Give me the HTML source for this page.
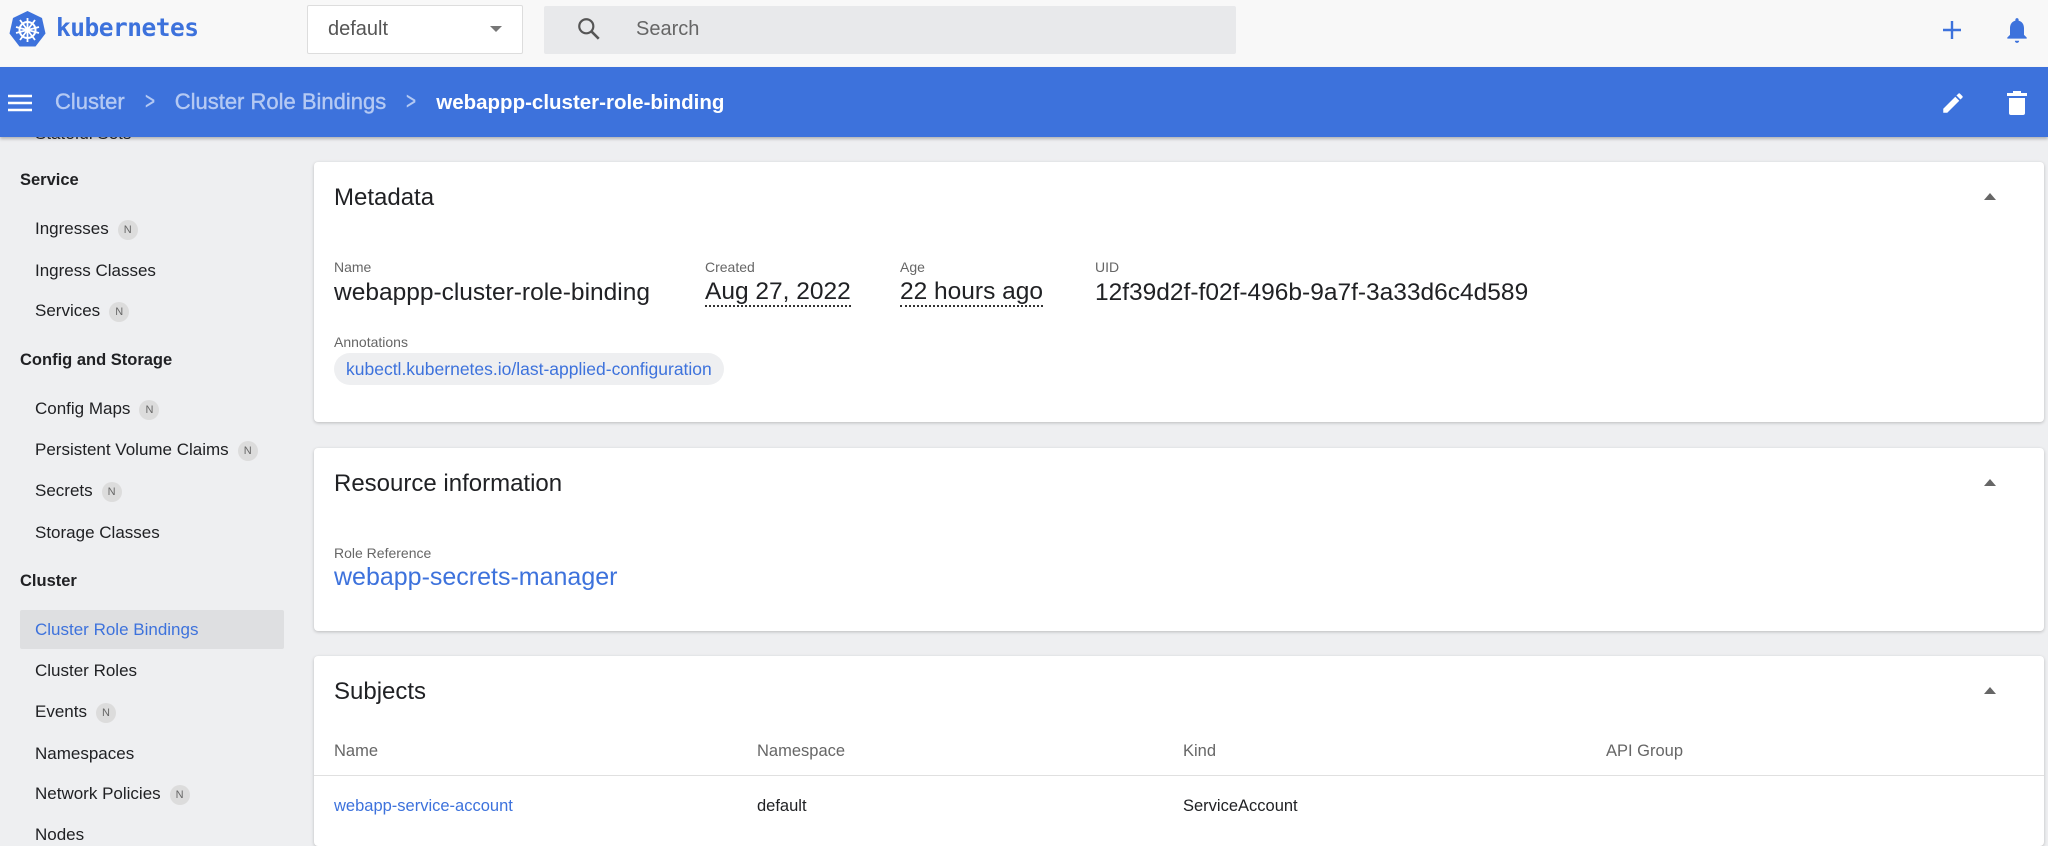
<!DOCTYPE html>
<html><head><meta charset="utf-8"><style>
*{box-sizing:border-box;margin:0;padding:0}
body{width:2048px;height:833px;overflow:hidden;background:#eeeff1;font-family:"Liberation Sans",sans-serif;position:relative;color:#202124}
.abs{position:absolute}
.top{left:0;top:0;width:2048px;height:67px;background:#f8f8f8}
.blue{left:0;top:67px;width:2048px;height:70px;background:#3d72dc;box-shadow:0 2px 3px rgba(0,0,0,.25)}
.side{font-size:17px;color:#202124}
.sh{font-weight:bold;left:20px;font-size:16.5px}
.si{left:35px}
.n{display:inline-block;width:20px;height:20px;border-radius:10px;background:#dcdcdc;color:#666;font-size:11px;text-align:center;line-height:20px;margin-left:9px;vertical-align:1px}
.card{left:314px;width:1730px;background:#fff;border-radius:4px;box-shadow:0 1px 3px rgba(0,0,0,.22)}
.ct{position:absolute;left:20px;font-size:24px;color:#202124}
.lab{position:absolute;font-size:14px;color:#666}
.val{position:absolute;font-size:24.5px;color:#202124}
.dot{border-bottom:2px dotted #333;line-height:1.05}
.tri{position:absolute;left:1670px;width:0;height:0;border-left:6px solid transparent;border-right:6px solid transparent;border-bottom:7px solid #666}
.sep{display:inline-block;margin:0 18px;font-size:24px;transform:scaleX(.7);vertical-align:0px}
</style></head><body>
<div class="abs top"></div>
<svg class="abs" style="left:9px;top:11px" width="37" height="37" viewBox="0 0 37 37"><polygon points="18.5,0 33,7 36.5,22.5 26.5,35.5 10.5,35.5 0.5,22.5 4,7" fill="#3d72dc"/><circle cx="18.5" cy="19" r="8" fill="none" stroke="#fff" stroke-width="2"/><g stroke="#fff" stroke-width="1.8"><line x1="18.5" y1="7" x2="18.5" y2="31"/><line x1="7" y1="16" x2="30" y2="22"/><line x1="30" y1="16" x2="7" y2="22"/><line x1="11" y1="9" x2="26" y2="29"/><line x1="26" y1="9" x2="11" y2="29"/></g><circle cx="18.5" cy="19" r="2.5" fill="#fff"/></svg>
<div class="abs" style="left:56px;top:13px;font-family:'DejaVu Sans Mono','Liberation Mono',monospace;font-size:24.5px;font-weight:bold;color:#3d72dc;letter-spacing:-0.5px">kubernetes</div>
<div class="abs" style="left:307px;top:5px;width:216px;height:49px;border:1px solid #ddd;background:#fff;border-radius:2px"></div>
<div class="abs" style="left:328px;top:18px;font-size:20px;color:#555">default</div>
<div class="abs" style="left:490px;top:26px;border-left:6px solid transparent;border-right:6px solid transparent;border-top:6px solid #777"></div>
<div class="abs" style="left:544px;top:6px;width:692px;height:48px;background:#e8e9eb;border-radius:2px"></div>
<svg class="abs" style="left:576px;top:16px" width="26" height="26" viewBox="0 0 24 24"><circle cx="9.5" cy="9.5" r="6.5" fill="none" stroke="#555" stroke-width="2"/><line x1="14.5" y1="14.5" x2="21" y2="21" stroke="#555" stroke-width="2.4"/></svg>
<div class="abs" style="left:636px;top:18px;font-size:20px;color:#666">Search</div>
<svg class="abs" style="left:1941px;top:19px" width="22" height="22" viewBox="0 0 22 22"><path d="M11 2v18M2 11h18" stroke="#3d72dc" stroke-width="2.4"/></svg>
<svg class="abs" style="left:2004px;top:16px" width="26" height="28" viewBox="0 0 24 26"><path d="M12 2c1 0 1.5.7 1.5 1.5v.8C17 5.2 18.5 8 18.5 11.5v6l2.5 2.5v1H3v-1l2.5-2.5v-6C5.5 8 7 5.2 10.5 4.3v-.8C10.5 2.7 11 2 12 2zM10 23h4a2 2 0 0 1-4 0z" fill="#3d72dc"/></svg>

<div class="abs blue"></div>
<svg class="abs" style="left:8px;top:93px" width="24" height="20" viewBox="0 0 24 20"><path d="M0 3h24M0 10h24M0 17h24" stroke="#fff" stroke-width="2.6"/></svg>
<div class="abs" style="left:55px;top:88px;font-size:22px;color:#b4c9f3;white-space:nowrap;-webkit-text-stroke:0.4px #b4c9f3">Cluster<span class="sep">&gt;</span>Cluster Role Bindings<span class="sep">&gt;</span><span style="color:#fff;font-size:20.5px;font-weight:bold;-webkit-text-stroke:0">webappp-cluster-role-binding</span></div>
<svg class="abs" style="left:1940px;top:90px" width="26" height="26" viewBox="0 0 24 24"><path d="M3 17.3V21h3.7L17.8 9.9l-3.7-3.7zM20.7 7a1 1 0 0 0 0-1.4l-2.3-2.3a1 1 0 0 0-1.4 0l-1.8 1.8 3.7 3.7z" fill="#fff"/></svg>
<svg class="abs" style="left:2005px;top:89px" width="24" height="28" viewBox="0 0 24 28"><path d="M8 2h8v2h6v3H2V4h6zM4 9h16v15a2 2 0 0 1-2 2H6a2 2 0 0 1-2-2z" fill="#fff"/></svg>

<div class="side">
<div class="abs si" style="top:137px;height:6px;overflow:hidden;width:200px"><div style="margin-top:-13px">Stateful Sets</div></div>
<div class="abs sh" style="top:171px">Service</div>
<div class="abs si" style="top:219px">Ingresses<span class="n">N</span></div>
<div class="abs si" style="top:261px">Ingress Classes</div>
<div class="abs si" style="top:301px">Services<span class="n">N</span></div>
<div class="abs sh" style="top:351px">Config and Storage</div>
<div class="abs si" style="top:399px">Config Maps<span class="n">N</span></div>
<div class="abs si" style="top:440px">Persistent Volume Claims<span class="n">N</span></div>
<div class="abs si" style="top:481px">Secrets<span class="n">N</span></div>
<div class="abs si" style="top:523px">Storage Classes</div>
<div class="abs sh" style="top:572px">Cluster</div>
<div class="abs" style="left:20px;top:610px;width:264px;height:39px;background:#dedfe1;border-radius:2px"></div>
<div class="abs si" style="top:620px;color:#3d72dc">Cluster Role Bindings</div>
<div class="abs si" style="top:661px">Cluster Roles</div>
<div class="abs si" style="top:702px">Events<span class="n">N</span></div>
<div class="abs si" style="top:744px">Namespaces</div>
<div class="abs si" style="top:784px">Network Policies<span class="n">N</span></div>
<div class="abs si" style="top:825px">Nodes</div>
</div>

<div class="abs card" style="top:162px;height:260px">
<div class="ct" style="top:22px">Metadata</div><div class="tri" style="top:31px"></div>
<div class="lab" style="left:20px;top:97px">Name</div><div class="val" style="left:20px;top:117px">webappp-cluster-role-binding</div>
<div class="lab" style="left:391px;top:97px">Created</div><div class="val dot" style="left:391px;top:117px">Aug 27, 2022</div>
<div class="lab" style="left:586px;top:97px">Age</div><div class="val dot" style="left:586px;top:117px">22 hours ago</div>
<div class="lab" style="left:781px;top:97px">UID</div><div class="val" style="left:781px;top:117px">12f39d2f-f02f-496b-9a7f-3a33d6c4d589</div>
<div class="lab" style="left:20px;top:172px">Annotations</div>
<div style="position:absolute;left:20px;top:191px;height:32px;padding:0 12px;border-radius:16px;background:#eeeff1;color:#3d72dc;font-size:17.5px;line-height:32px">kubectl.kubernetes.io/last-applied-configuration</div>
</div>

<div class="abs card" style="top:448px;height:183px">
<div class="ct" style="top:22px">Resource information</div><div class="tri" style="top:31px"></div>
<div class="lab" style="left:20px;top:97px">Role Reference</div>
<div style="position:absolute;left:20px;top:115px;font-size:25px;color:#3d72dc">webapp-secrets-manager</div>
</div>

<div class="abs card" style="top:656px;height:190px">
<div class="ct" style="top:22px">Subjects</div><div class="tri" style="top:31px"></div>
<div class="lab" style="left:20px;top:86px;font-size:16.5px">Name</div>
<div class="lab" style="left:443px;top:86px;font-size:16.5px">Namespace</div>
<div class="lab" style="left:869px;top:86px;font-size:16.5px">Kind</div>
<div class="lab" style="left:1292px;top:86px;font-size:16.5px">API Group</div>
<div style="position:absolute;left:0;top:119px;width:100%;height:1px;background:#e0e0e0"></div>
<div style="position:absolute;left:20px;top:141px;font-size:16.5px;color:#3d72dc">webapp-service-account</div>
<div style="position:absolute;left:443px;top:141px;font-size:16.5px">default</div>
<div style="position:absolute;left:869px;top:141px;font-size:16.5px">ServiceAccount</div>
</div>
</body></html>
